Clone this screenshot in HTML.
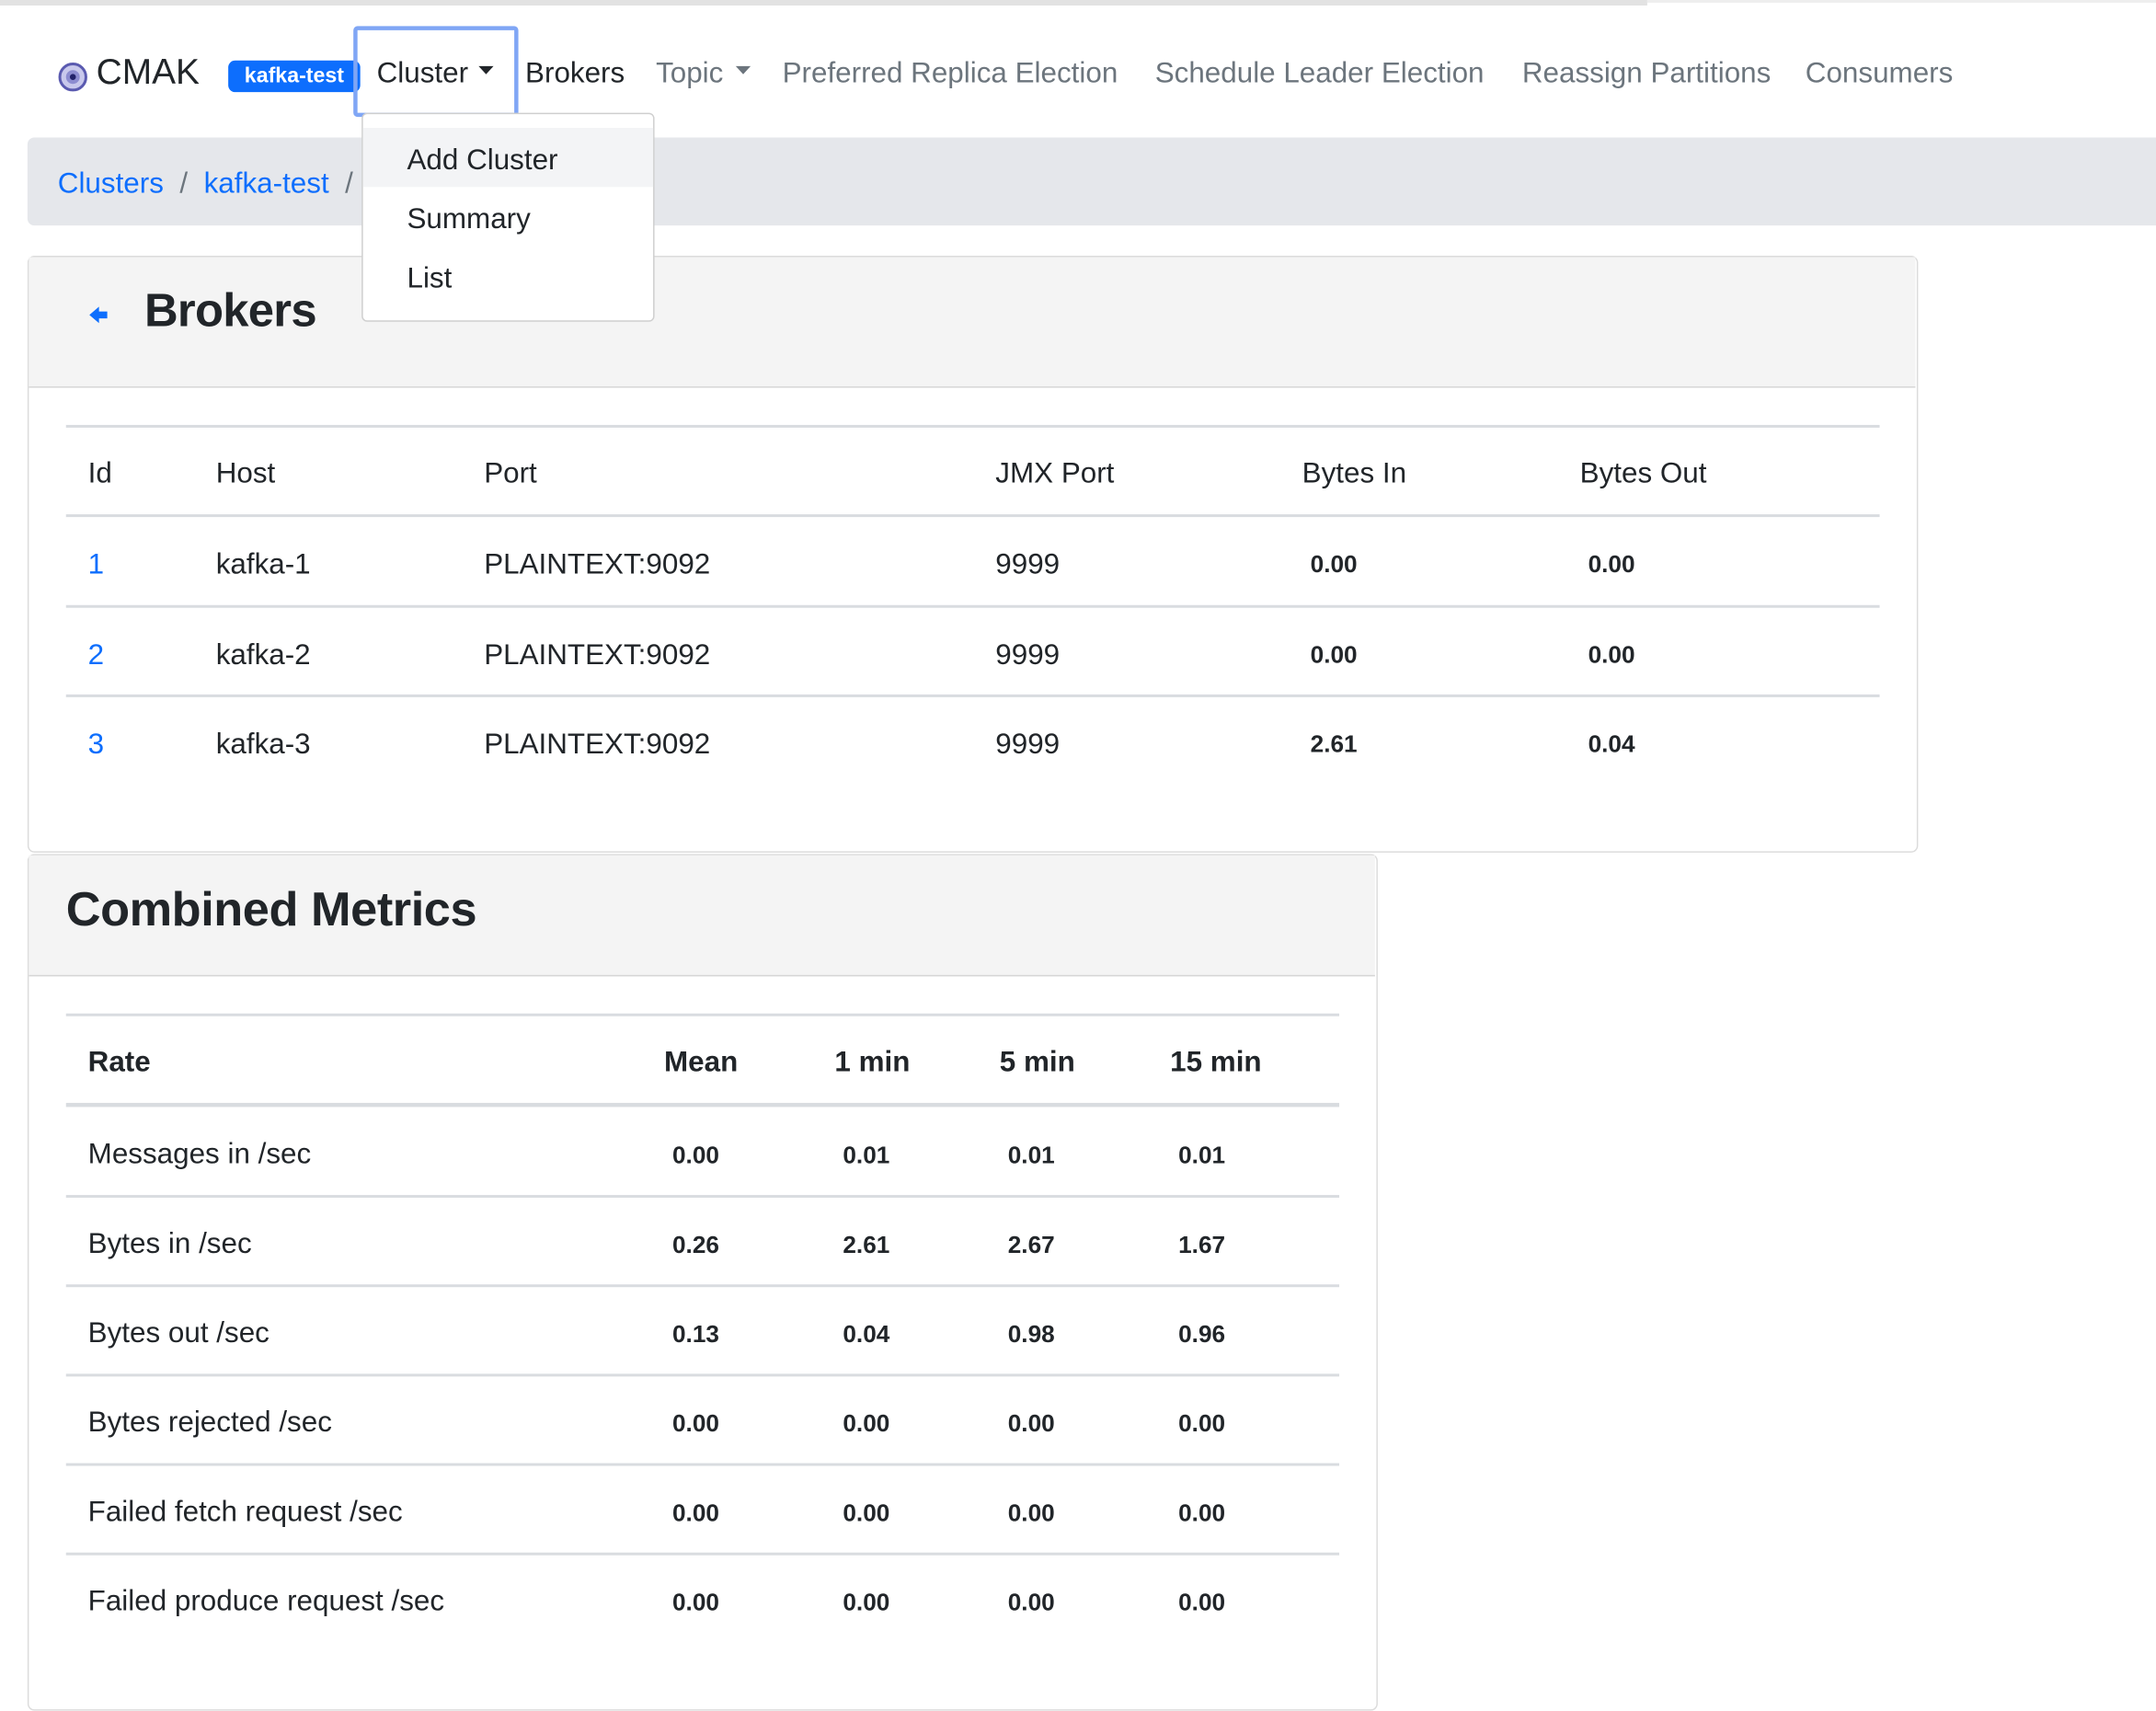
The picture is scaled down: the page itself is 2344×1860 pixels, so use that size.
<!DOCTYPE html>
<html><head><meta charset="utf-8"><style>
html,body{margin:0;padding:0;background:#fff;width:2344px;height:1860px;overflow:hidden}
#w{position:absolute;left:0;top:0;width:1568px;height:1244px;transform:scale(1.4949);transform-origin:0 0;font-family:"Liberation Sans",sans-serif;color:#212529}
.a{position:absolute;white-space:nowrap}
.n{font-size:21px;top:42px}
.line{position:absolute;height:1.5px;background:#d9dce0}
.t{font-size:21px;position:absolute;white-space:nowrap;margin-top:2px}
.v{font-size:17.5px;font-weight:bold;position:absolute;white-space:nowrap;margin-top:1px}
.b{color:#0d6efd}
</style></head><body><div id="w">
<div style="position:absolute;left:0;top:0;width:1198px;height:4px;background:#e2e2e2"></div>
<div style="position:absolute;left:1198px;top:0;width:370px;height:2px;background:#eee"></div>
<svg class="a" style="left:42px;top:45px" width="22" height="22" viewBox="0 0 22 22"><circle cx="11" cy="11" r="9.5" fill="#c8c8ec" stroke="#5a5ab0" stroke-width="2"/><circle cx="11" cy="11" r="5" fill="#8c8cd0"/><circle cx="11" cy="11" r="2.2" fill="#22226a"/></svg>
<div class="a" style="left:70px;top:37px;font-size:26px">CMAK</div>
<div class="a" style="left:166px;top:44px;width:96px;height:23px;background:#0d6efd;border-radius:5px;color:#fff;font-weight:bold;font-size:15.5px;line-height:24px;text-align:center">kafka-test</div>
<div class="a" style="left:257px;top:19px;width:114px;height:60px;border:3px solid #80a6f5;border-radius:3px"></div>
<div class="a n" style="left:274px">Cluster</div>
<svg class="a" style="left:348px;top:48px" width="12" height="8"><path d="M0 0H11L5.5 6Z" fill="#212529"/></svg>
<div class="a n" style="left:382px">Brokers</div>
<div class="a n" style="left:477px;color:#6c757d">Topic</div>
<svg class="a" style="left:535px;top:48px" width="12" height="8"><path d="M0 0H11L5.5 6Z" fill="#6c757d"/></svg>
<div class="a n" style="left:569px;color:#6c757d">Preferred Replica Election</div>
<div class="a n" style="left:840px;color:#6c757d">Schedule Leader Election</div>
<div class="a n" style="left:1107px;color:#6c757d">Reassign Partitions</div>
<div class="a n" style="left:1313px;color:#6c757d">Consumers</div>

<div class="a" style="left:20px;top:100px;width:1560px;height:64px;background:#e5e7eb;border-radius:5px"></div>
<div class="t" style="left:42px;top:120px"><span class="b">Clusters</span> <span style="color:#6c757d">&nbsp;/&nbsp;</span> <span class="b">kafka-test</span> <span style="color:#6c757d">&nbsp;/</span></div>

<div class="a" style="left:20px;top:186px;width:1373px;height:432px;border:1.5px solid #dcdcdc;border-radius:5px"></div>
<div class="a" style="left:21px;top:187px;width:1372px;height:94px;background:#f4f4f4;border-bottom:1.5px solid #d6d6d6"></div>
<svg class="a" style="left:65px;top:222px" width="14" height="14"><path d="M0 7L7 1V4.5H13V9.5H7V13Z" fill="#0d6efd"/></svg>
<div class="a" style="left:105px;top:207px;font-size:34px;font-weight:600;letter-spacing:-0.5px">Brokers</div>
<div class="line" style="left:48px;top:309px;width:1319px"></div>
<div class="t" style="left:64px;top:331px">Id</div><div class="t" style="left:157px;top:331px">Host</div><div class="t" style="left:352px;top:331px">Port</div><div class="t" style="left:724px;top:331px">JMX Port</div><div class="t" style="left:947px;top:331px">Bytes In</div><div class="t" style="left:1149px;top:331px">Bytes Out</div>
<div class="line" style="left:48px;top:374px;width:1319px"></div>
<div class="t b" style="left:64px;top:397px">1</div><div class="t" style="left:157px;top:397px">kafka-1</div><div class="t" style="left:352px;top:397px">PLAINTEXT:9092</div><div class="t" style="left:724px;top:397px">9999</div><div class="v" style="left:953px;top:399px">0.00</div><div class="v" style="left:1155px;top:399px">0.00</div>
<div class="line" style="left:48px;top:440px;width:1319px"></div>
<div class="t b" style="left:64px;top:463px">2</div><div class="t" style="left:157px;top:463px">kafka-2</div><div class="t" style="left:352px;top:463px">PLAINTEXT:9092</div><div class="t" style="left:724px;top:463px">9999</div><div class="v" style="left:953px;top:465px">0.00</div><div class="v" style="left:1155px;top:465px">0.00</div>
<div class="line" style="left:48px;top:505px;width:1319px"></div>
<div class="t b" style="left:64px;top:528px">3</div><div class="t" style="left:157px;top:528px">kafka-3</div><div class="t" style="left:352px;top:528px">PLAINTEXT:9092</div><div class="t" style="left:724px;top:528px">9999</div><div class="v" style="left:953px;top:530px">2.61</div><div class="v" style="left:1155px;top:530px">0.04</div>

<div class="a" style="left:20px;top:621px;width:980px;height:621px;border:1.5px solid #dcdcdc;border-radius:5px"></div>
<div class="a" style="left:21px;top:622px;width:979px;height:87px;background:#f4f4f4;border-bottom:1.5px solid #d6d6d6"></div>
<div class="a" style="left:48px;top:642px;font-size:35px;font-weight:600;letter-spacing:-0.3px">Combined Metrics</div>
<div class="line" style="left:48px;top:737px;width:926px"></div>
<div class="t" style="left:64px;top:759px;font-weight:bold">Rate</div><div class="t" style="left:483px;top:759px;font-weight:bold">Mean</div><div class="t" style="left:607px;top:759px;font-weight:bold">1 min</div><div class="t" style="left:727px;top:759px;font-weight:bold">5 min</div><div class="t" style="left:851px;top:759px;font-weight:bold">15 min</div>
<div class="line" style="left:48px;top:802px;width:926px;height:3px"></div>

<div class="t" style="left:64px;top:826px">Messages in /sec</div><div class="v" style="left:489px;top:829px">0.00</div><div class="v" style="left:613px;top:829px">0.01</div><div class="v" style="left:733px;top:829px">0.01</div><div class="v" style="left:857px;top:829px">0.01</div>
<div class="line" style="left:48px;top:869px;width:926px"></div>
<div class="t" style="left:64px;top:891px">Bytes in /sec</div><div class="v" style="left:489px;top:894px">0.26</div><div class="v" style="left:613px;top:894px">2.61</div><div class="v" style="left:733px;top:894px">2.67</div><div class="v" style="left:857px;top:894px">1.67</div>
<div class="line" style="left:48px;top:934px;width:926px"></div>
<div class="t" style="left:64px;top:956px">Bytes out /sec</div><div class="v" style="left:489px;top:959px">0.13</div><div class="v" style="left:613px;top:959px">0.04</div><div class="v" style="left:733px;top:959px">0.98</div><div class="v" style="left:857px;top:959px">0.96</div>
<div class="line" style="left:48px;top:999px;width:926px"></div>
<div class="t" style="left:64px;top:1021px">Bytes rejected /sec</div><div class="v" style="left:489px;top:1024px">0.00</div><div class="v" style="left:613px;top:1024px">0.00</div><div class="v" style="left:733px;top:1024px">0.00</div><div class="v" style="left:857px;top:1024px">0.00</div>
<div class="line" style="left:48px;top:1064px;width:926px"></div>
<div class="t" style="left:64px;top:1086px">Failed fetch request /sec</div><div class="v" style="left:489px;top:1089px">0.00</div><div class="v" style="left:613px;top:1089px">0.00</div><div class="v" style="left:733px;top:1089px">0.00</div><div class="v" style="left:857px;top:1089px">0.00</div>
<div class="line" style="left:48px;top:1129px;width:926px"></div>
<div class="t" style="left:64px;top:1151px">Failed produce request /sec</div><div class="v" style="left:489px;top:1154px">0.00</div><div class="v" style="left:613px;top:1154px">0.00</div><div class="v" style="left:733px;top:1154px">0.00</div><div class="v" style="left:857px;top:1154px">0.00</div>

<div class="a" style="left:263px;top:82px;width:211px;height:150px;background:#fff;border:1.5px solid #cfcfcf;border-radius:4px"></div>
<div class="a" style="left:264px;top:93px;width:211px;height:43px;background:#f3f4f6"></div>
<div class="t" style="left:296px;top:103px">Add Cluster</div>
<div class="t" style="left:296px;top:146px">Summary</div>
<div class="t" style="left:296px;top:189px">List</div>
</div></body></html>
